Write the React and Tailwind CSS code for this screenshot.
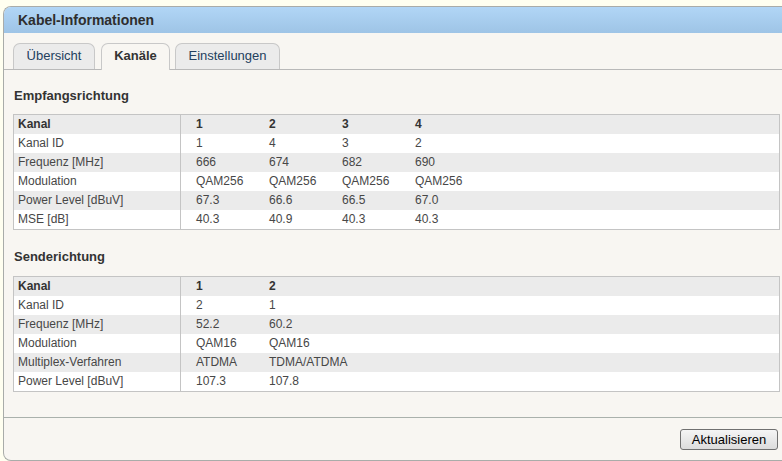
import React from "react";

const font = { fontFamily: '"Liberation Sans", Arial, sans-serif' };

function DataTable({ rows }) {
  const cols = rows[0].length - 1;
  return (
    <div className="border border-[#c4c4c4] bg-white">
      {rows.map((r, i) => (
        <div
          key={i}
          className={
            "grid grid-cols-[167px_73px_73px_73px_73px_1fr] h-[19px] items-center text-[12px] leading-[19px] " +
            (i % 2 === 0 ? "bg-[#ebebeb] " : "bg-white ") +
            (i === 0 ? "font-bold text-[#333]" : "text-[#474747]")
          }
        >
          <div className="pl-[4px] h-full border-r border-[#c4c4c4]">{r[0]}</div>
          {[0, 1, 2, 3].map((c) => (
            <div key={c} className="pl-[15px] h-full whitespace-nowrap">
              {c < cols ? r[c + 1] : ""}
            </div>
          ))}
          <div />
        </div>
      ))}
    </div>
  );
}

export default function App() {
  const down = [
    ["Kanal", "1", "2", "3", "4"],
    ["Kanal ID", "1", "4", "3", "2"],
    ["Frequenz [MHz]", "666", "674", "682", "690"],
    ["Modulation", "QAM256", "QAM256", "QAM256", "QAM256"],
    ["Power Level [dBuV]", "67.3", "66.6", "66.5", "67.0"],
    ["MSE [dB]", "40.3", "40.9", "40.3", "40.3"],
  ];
  const up = [
    ["Kanal", "1", "2"],
    ["Kanal ID", "2", "1"],
    ["Frequenz [MHz]", "52.2", "60.2"],
    ["Modulation", "QAM16", "QAM16"],
    ["Multiplex-Verfahren", "ATDMA", "TDMA/ATDMA"],
    ["Power Level [dBuV]", "107.3", "107.8"],
  ];
  return (
    <div style={font} className="w-[782px] h-[461px] overflow-hidden bg-[#fffff0] pt-[6px] pl-[3px]">
      <div className="h-[455px] flex flex-col border-l border-t border-b border-[#a9aca9] rounded-tl-[8px] rounded-bl-[8px] bg-[#f8f6f2] overflow-hidden">
        <div className="h-[26px] shrink-0 bg-gradient-to-b from-[#b1d6f6] to-[#9ec4e6] flex items-center pl-[14px]">
          <span className="text-[14px] font-bold text-[#2e2e2e]">Kabel-Informationen</span>
        </div>
        <div className="pt-[10px] pl-[9px] border-b border-[#b9b9b9] flex items-end h-[37px] shrink-0">
          <div className="w-[82px] h-[26px] mr-[6px] pb-[2px] rounded-t-[7px] border border-b-0 border-[#c8c8c8] bg-[#ebebeb] flex items-center justify-center text-[13px] text-[#23405e]">
            Übersicht
          </div>
          <div className="w-[69px] h-[27px] -mb-px mr-[5px] pb-[3px] rounded-t-[7px] border border-b-0 border-[#c8c8c8] bg-[#f8f6f2] flex items-center justify-center text-[13px] font-bold text-[#333]">
            Kanäle
          </div>
          <div className="w-[105px] h-[26px] pb-[2px] rounded-t-[7px] border border-b-0 border-[#c8c8c8] bg-[#ebebeb] flex items-center justify-center text-[13px] text-[#23405e]">
            Einstellungen
          </div>
        </div>
        <div className="pl-[9px] pr-[2px] flex-1">
          <div className="mt-[18px] mb-[10px] pl-[1px] h-[16px] leading-[16px] text-[13px] font-bold text-[#333]">
            Empfangsrichtung
          </div>
          <DataTable rows={down} />
          <div className="mt-[19px] mb-[11px] pl-[1px] h-[16px] leading-[16px] text-[13px] font-bold text-[#333]">
            Senderichtung
          </div>
          <DataTable rows={up} />
        </div>
        <div className="h-[43px] shrink-0 border-t border-[#aab1ac] flex justify-end items-start pt-[11px] pr-[4px]">
          <button className="w-[98px] h-[21px] rounded-[3px] border border-[#707070] bg-gradient-to-b from-[#f5f5f5] to-[#dcdcdc] text-[13px] text-black leading-[19px]">
            Aktualisieren
          </button>
        </div>
      </div>
    </div>
  );
}
